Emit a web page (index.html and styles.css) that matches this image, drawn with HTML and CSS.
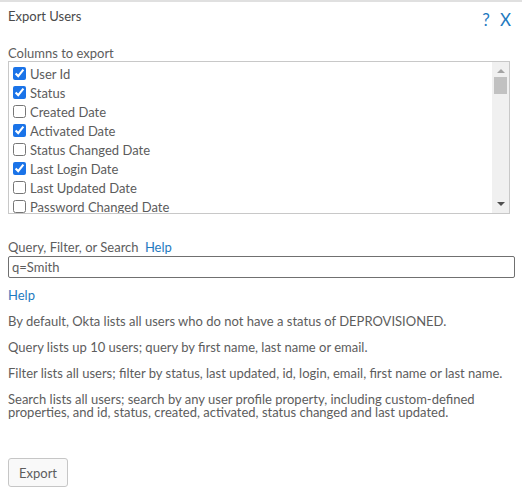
FILE: index.html
```html
<!DOCTYPE html>
<html lang="en">
<head>
  <meta charset="UTF-8" />
  <title>Export Users</title>
  <link rel="stylesheet" href="styles.css">
</head>
<body>
  <div class="dialogo">
    <div class="cabecalho">
      <span class="titulo">Export Users</span>
      <span class="acoes"><a href="#" class="ajuda">?</a><a href="#" class="fechar">X</a></span>
    </div>

    <div class="rotulo">Columns to export</div>
    <div class="lista">
      <div class="itens">
        <label><input type="checkbox" checked> User Id</label>
        <label><input type="checkbox" checked> Status</label>
        <label><input type="checkbox"> Created Date</label>
        <label><input type="checkbox" checked> Activated Date</label>
        <label><input type="checkbox"> Status Changed Date</label>
        <label><input type="checkbox" checked> Last Login Date</label>
        <label><input type="checkbox"> Last Updated Date</label>
        <label><input type="checkbox"> Password Changed Date</label>
      </div>
      <div class="barra">
        <span class="seta-cima"></span>
        <span class="polegar"></span>
        <span class="espaco"></span>
        <span class="seta-baixo"></span>
      </div>
    </div>

    <div class="rotulo pesquisa">Query, Filter, or Search <a href="#">Help</a></div>
    <input class="campo" type="text" value="q=Smith">

    <div class="texto">
      <p><a href="#">Help</a></p>
      <p>By default, Okta lists all users who do not have a status of DEPROVISIONED.</p>
      <p>Query lists up 10 users; query by first name, last name or email.</p>
      <p>Filter lists all users; filter by status, last updated, id, login, email, first name or last name.</p>
      <p>Search lists all users; search by any user profile property, including custom-defined properties, and id, status, created, activated, status changed and last updated.</p>
    </div>

    <button class="botao">Export</button>
  </div>
</body>
</html>
```

FILE: styles.css
```css
body {
  margin: 0;
  background: #fff;
  color: #5d5d5d;
  font-family: Lato, "Open Sans", Arial, sans-serif;
  font-size: 13px;
}

a {
  color: #1f7ac0;
  text-decoration: none;
}

.dialogo {
  border-top: 2px solid #e0e0e0;
  padding: 5px 8px 0 8px;
}

.cabecalho {
  display: flex;
  justify-content: space-between;
  align-items: flex-start;
  height: 38px;
}

.titulo {
  font-size: 13px;
  color: #4a4a4a;
  padding-top: 1px;
}

.acoes {
  display: flex;
  gap: 10px;
  font-size: 17px;
  padding: 2px 3px 0 0;
}

.rotulo {
  line-height: 16px;
}

.lista {
  display: flex;
  width: 500px;
  height: 151px;
  border: 1px solid #c8c8c8;
  overflow: hidden;
}

.itens {
  flex: 1;
  padding: 2px 0 0 3px;
}

.itens label {
  display: flex;
  align-items: center;
  height: 19px;
  color: #5c5c5c;
}

.itens input {
  width: 13px;
  height: 13px;
  margin: 0 4px 0 1px;
  accent-color: #1a73e8;
}

.barra {
  width: 17px;
  background: #f0f0f0;
  display: flex;
  flex-direction: column;
  align-items: center;
}

.seta-cima {
  margin-top: 7px;
  border: 4px solid transparent;
  border-top: 0;
  border-bottom: 4px solid #a3a3a3;
}

.polegar {
  margin-top: 4px;
  width: 13px;
  height: 17px;
  background: #c1c1c1;
}

.espaco {
  flex: 1;
}

.seta-baixo {
  margin-bottom: 7px;
  border: 4px solid transparent;
  border-bottom: 0;
  border-top: 4px solid #505050;
}

.pesquisa {
  margin-top: 25px;
}

.pesquisa a {
  margin-left: 3px;
}

.campo {
  display: block;
  box-sizing: border-box;
  width: 507px;
  height: 22px;
  margin-top: 1px;
  padding: 0 3px;
  border: 1px solid #707070;
  border-radius: 2px;
  font-family: inherit;
  font-size: 13px;
  color: #5d5d5d;
}

.texto {
  margin-top: 11px;
}

.texto p {
  margin: 0 0 13px 0;
  line-height: 13px;
}

.botao {
  margin-top: 26px;
  padding: 0 10px;
  height: 29px;
  background: #f9f9f9;
  border: 1px solid #c6c6c6;
  border-radius: 3px;
  font-family: inherit;
  font-size: 13px;
  color: #5d5d5d;
}
```
